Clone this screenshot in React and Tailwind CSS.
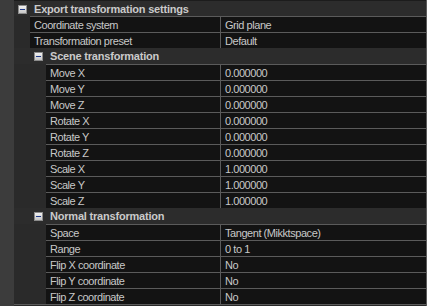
import React from 'react';

const rows = [
  { header: true, level: 0, label: 'Export transformation settings' },
  { level: 0, label: 'Coordinate system', value: 'Grid plane' },
  { level: 0, label: 'Transformation preset', value: 'Default' },
  { header: true, level: 1, label: 'Scene transformation' },
  { level: 1, label: 'Move X', value: '0.000000' },
  { level: 1, label: 'Move Y', value: '0.000000' },
  { level: 1, label: 'Move Z', value: '0.000000' },
  { level: 1, label: 'Rotate X', value: '0.000000' },
  { level: 1, label: 'Rotate Y', value: '0.000000' },
  { level: 1, label: 'Rotate Z', value: '0.000000' },
  { level: 1, label: 'Scale X', value: '1.000000' },
  { level: 1, label: 'Scale Y', value: '1.000000' },
  { level: 1, label: 'Scale Z', value: '1.000000' },
  { header: true, level: 1, label: 'Normal transformation' },
  { level: 1, label: 'Space', value: 'Tangent (Mikktspace)' },
  { level: 1, label: 'Range', value: '0 to 1' },
  { level: 1, label: 'Flip X coordinate', value: 'No' },
  { level: 1, label: 'Flip Y coordinate', value: 'No' },
  { level: 1, label: 'Flip Z coordinate', value: 'No' },
];

const MinusBox = () => (
  <svg width="9" height="9" viewBox="0 0 9 9" className="mt-[4px] shrink-0">
    <defs>
      <linearGradient id="mb" x1="0" y1="0" x2="0" y2="1">
        <stop offset="0" stopColor="#f4f4f4" />
        <stop offset="1" stopColor="#c4c4c4" />
      </linearGradient>
    </defs>
    <rect x="0.5" y="0.5" width="8" height="8" fill="url(#mb)" stroke="#8c8c8c" />
    <rect x="2" y="4" width="5" height="1" fill="#1f3a8a" />
  </svg>
);

const HeaderRow = ({ level, label, first }) => (
  <div
    className={`flex h-[16px] items-start bg-[#2c2c2c] ${first ? 'border-t border-[#1c1c1c]' : ''} ${
      level === 0 ? 'pl-[4px]' : 'pl-[20px]'
    }`}
  >
    <MinusBox />
    <span className="ml-[7px] font-bold tracking-[-0.2px] text-[#cacaca]">{label}</span>
  </div>
);

const DataRow = ({ level, label, value }) => (
  <div className="flex h-[16px]">
    <div className={level === 0 ? 'w-[16px] shrink-0' : 'w-[32px] shrink-0'} />
    <div className="flex flex-1 border-t border-[#5b5b5b] bg-[#131313] tracking-[-0.45px] text-[#c8c8c8]">
      <div className={`${level === 0 ? 'w-[191px]' : 'w-[175px]'} shrink-0 border-r border-[#5b5b5b] pl-[4px]`}>
        {label}
      </div>
      <div className="flex-1 pl-[4px]">{value}</div>
    </div>
  </div>
);

export default function App() {
  return (
    <div
      className="flex h-[306px] w-[427px] overflow-hidden bg-[#2a2a2a] text-[11px] leading-[16px]"
      style={{ fontFamily: '"Liberation Sans", Arial, sans-serif' }}
    >
      <div className="w-[14px] shrink-0 bg-[#3c3c3c]" />
      <div className="flex flex-1 flex-col border-r border-[#5b5b5b]">
        {rows.map((r, i) =>
          r.header ? (
            <HeaderRow key={i} level={r.level} label={r.label} first={i === 0} />
          ) : (
            <DataRow key={i} {...r} />
          )
        )}
        <div className="h-[1px] shrink-0 bg-[#5b5b5b]" />
      </div>
    </div>
  );
}
